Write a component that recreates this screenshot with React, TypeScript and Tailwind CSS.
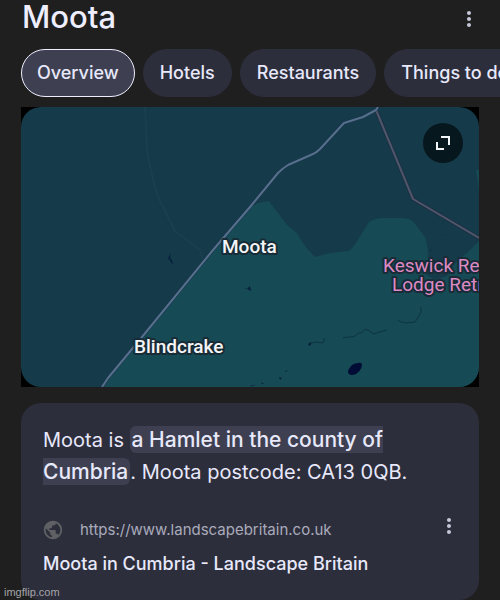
import { MdMoreVert, MdPublic } from "react-icons/md";

const tabs = ["Overview", "Hotels", "Restaurants", "Things to do"];

const Header = () => {
  return (
    <header className="flex items-start justify-between pl-[22px] pr-[19px] h-[38px]">
      <h1 className="text-[31px] leading-[34px] font-medium text-[#eeeeff]">Moota</h1>
      <button aria-label="More options" className="mt-[7px] text-[#c5c7d8]">
        <MdMoreVert className="size-6" />
      </button>
    </header>
  );
};

const Tabs = () => {
  return (
    <nav className="flex gap-2 pl-[21px] mt-[11px] overflow-hidden">
      {tabs.map((tab, i) => (
        <button
          key={tab}
          className={`h-12 shrink-0 rounded-full border text-lg font-medium text-[#e8e8fb] ${
            i === 0 ? "px-[15px] bg-[#3e4052] border-[#eeeeff]" : "px-4 bg-[#2d2e3c] border-[#2d2e3c]"
          }`}
        >
          {tab}
        </button>
      ))}
    </nav>
  );
};

const AreaMap = () => {
  return (
    <section className="relative mx-[21px] mt-[10px] bg-black">
      <svg
        viewBox="0 0 458 280"
        className="block w-full rounded-[20px] bg-[#153a49] font-['Roboto',sans-serif] text-[19px]"
        role="img"
        aria-label="Map of Moota"
      >
        {/* high ground */}
        <path
          fill="#164a54"
          d="M81 280 87 271 121 230 192 143 229 100 237 96 248 94 266 118 276 126Q281 137 294 150L309 146 328 144Q334 139 338 131L348 115Q355 111 362 111H382Q390 111 394 117L404 130Q410 150 405 168L415 173 428 168Q431 156 446 146L458 134V280Z"
        />
        <path fill="#164a54" d="M455 63H458V84Z" />

        {/* roads */}
        <g fill="none" strokeLinejoin="round">
          <path stroke="#1b3f4e" strokeWidth="2" d="M124 0 126 43Q130 68 137 90L154 124 179 143 182 154" />
          <path stroke="#1c3145" strokeWidth="4" d="M355 3 392 92 458 131" />
          <path stroke="#50566a" strokeWidth="2" d="M355 3 392 92 458 131" />
          <path stroke="#1c3450" strokeWidth="3" d="M357 0 355 3 342 10 323 16 299 42Q295 46 292 47L267 58Q262 61 257 66L229 100 192 143 121 230 87 271 81 280" />
          <path stroke="#56708c" strokeWidth="2" d="M357 0 355 3 342 10 323 16 299 42Q295 46 292 47L267 58Q262 61 257 66L229 100 192 143 121 230 87 271 81 280" />
        </g>

        {/* water */}
        <path fill="#000c36" d="M328 262Q331 256 337 256 341 255 341 258 340 264 335 267 330 269 328 267 326 265 328 262Z" />
        <path fill="#06213d" d="M150 146 147 151 152 158 151 153 149 151Z" />
        <path fill="#06213d" d="M229 179 226 182 230 184ZM224 181 226 181 225 182ZM288 236 291 235 289 239 287 238ZM258 270 261 271 259 273ZM264 264 267 263 265 265ZM240 275 243 277 241 277Z" />
        <g fill="none" stroke="#0d3346" strokeWidth="1">
          <path d="M291 236 295 235 301 236 303 235 303 231" />
          <path d="M322 231 326 230 331 230 334 229 337 226 340 226 345 222 353 227 358 225 366 223" />
          <path d="M377 213 380 215 386 216 394 215 398 209 400 205 400 200" />
          <path d="M422 114 422 117M421 127 421 129M410 142 410 145M229 279 234 278" />
        </g>

        <g stroke="#182c38" strokeWidth="4" strokeLinejoin="round" className="[paint-order:stroke]">
          <text x="201" y="146" fill="#f4f5f6" className="font-medium">Moota</text>
          <text x="113" y="246" fill="#f4f5f6" className="font-medium">Blindcrake</text>
          <text x="362" y="165" fill="#dd8ac4">Keswick Reach</text>
          <text x="371" y="184" fill="#dd8ac4">Lodge Retreat</text>
        </g>
      </svg>
      <button
        aria-label="Expand map"
        className="absolute top-4 right-4 size-10 flex items-center justify-center rounded-full bg-[#07171e]"
      >
        <svg viewBox="0 0 16 16" className="size-4" fill="none" stroke="#f2f5f6" strokeWidth="2">
          <path d="M6 2H14V10M2 7V14H9" />
        </svg>
      </button>
    </section>
  );
};

const ResultCard = () => {
  return (
    <article className="mx-[21px] mt-4 px-[22px] pt-[21px] pb-[22px] rounded-[20px] bg-[#2d2e3c] text-[#e8e8fb]">
      <p className="text-xl leading-8">
        Moota is{" "}
        <mark className="px-[2px] py-px rounded-md bg-[#3e4052] text-inherit text-[21px] leading-7 font-medium">
          a Hamlet in the county of Cumbria
        </mark>
        . Moota postcode: CA13 0QB.
      </p>
      <div className="flex items-start mt-[26px]">
        <div className="flex flex-1 items-center gap-4 pt-1">
          <MdPublic className="size-[22px] -ml-px text-[#5f6063]" />
          <cite className="not-italic text-[15px] leading-6 text-[#a9abbb]">https://www.landscapebritain.co.uk</cite>
        </div>
        <button aria-label="About this result" className="-mr-1 text-[#c5c7d8]">
          <MdMoreVert className="size-6" />
        </button>
      </div>
      <a href="#" className="block mt-2 text-lg leading-7 font-medium">
        Moota in Cumbria - Landscape Britain
      </a>
    </article>
  );
};

export default function App() {
  return (
    <div className="relative min-h-screen bg-[#1f1f1f] font-['Inter',sans-serif] overflow-hidden">
      <Header />
      <Tabs />
      <AreaMap />
      <ResultCard />
      <small className="absolute left-1 bottom-0 text-[11px] leading-4 text-[#a5a5a8] font-['Liberation_Sans',sans-serif]">
        imgflip.com
      </small>
    </div>
  );
}
